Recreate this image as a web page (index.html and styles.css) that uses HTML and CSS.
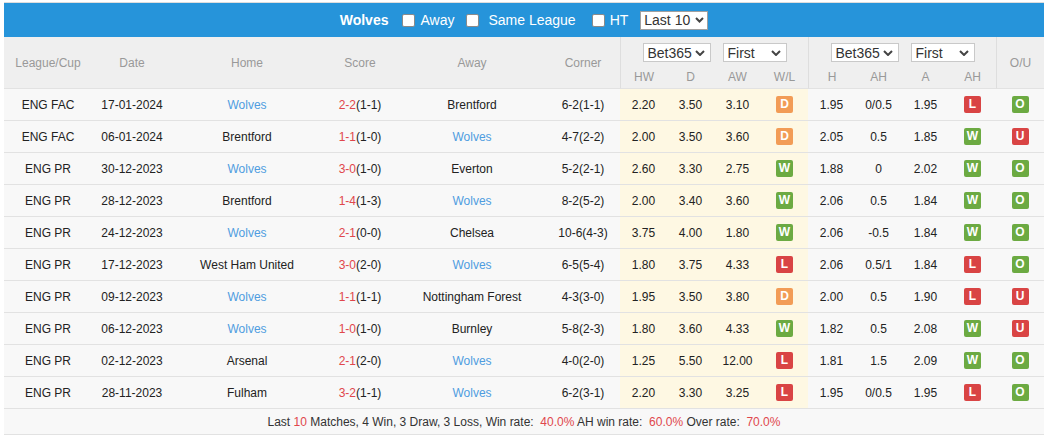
FILE: index.html
```html
<!DOCTYPE html>
<html>
<head>
<meta charset="utf-8">
<link rel="stylesheet" href="styles.css">
</head>
<body>
<div class="panel">
  <div class="titlebar">
    <span class="team">Wolves</span>
    <label class="opt"><input type="checkbox" class="chk">Away</label>
    <label class="opt opt-same"><input type="checkbox" class="chk">Same League</label>
    <label class="opt"><input type="checkbox" class="chk">HT</label>
    <div class="select sel-last"><span>Last 10</span><svg class="chev" width="9" height="6" viewBox="0 0 9 6"><path d="M1 1l3.5 3.5 3.5-3.5" stroke="#444" stroke-width="2" fill="none"/></svg></div>
  </div>
  <table class="matches">
    <colgroup>
      <col class="c-league"><col class="c-date"><col class="c-home"><col class="c-score"><col class="c-away"><col class="c-corner">
      <col class="c-odd"><col class="c-odd"><col class="c-odd"><col class="c-odd">
      <col class="c-odd"><col class="c-odd"><col class="c-odd"><col class="c-odd">
      <col class="c-ou">
    </colgroup>
    <thead>
      <tr class="h1">
        <th rowspan="2">League/Cup</th>
        <th rowspan="2">Date</th>
        <th rowspan="2">Home</th>
        <th rowspan="2">Score</th>
        <th rowspan="2">Away</th>
        <th rowspan="2">Corner</th>
        <th colspan="4" class="grp sel-cell">
          <div class="sels">
            <div class="select sel-book"><span>Bet365</span><svg class="chev" width="10" height="6" viewBox="0 0 10 6"><path d="M1 1l4 4 4-4" stroke="#444" stroke-width="2" fill="none"/></svg></div>
            <div class="select sel-first"><span>First</span><svg class="chev" width="10" height="6" viewBox="0 0 10 6"><path d="M1 1l4 4 4-4" stroke="#444" stroke-width="2" fill="none"/></svg></div>
          </div>
        </th>
        <th colspan="4" class="grp sel-cell">
          <div class="sels">
            <div class="select sel-book"><span>Bet365</span><svg class="chev" width="10" height="6" viewBox="0 0 10 6"><path d="M1 1l4 4 4-4" stroke="#444" stroke-width="2" fill="none"/></svg></div>
            <div class="select sel-first"><span>First</span><svg class="chev" width="10" height="6" viewBox="0 0 10 6"><path d="M1 1l4 4 4-4" stroke="#444" stroke-width="2" fill="none"/></svg></div>
          </div>
        </th>
        <th rowspan="2" class="grp">O/U</th>
      </tr>
      <tr class="h2">
        <th class="grp">HW</th><th>D</th><th>AW</th><th>W/L</th>
        <th class="grp">H</th><th>AH</th><th>A</th><th>AH</th>
      </tr>
    </thead>
    <tbody>
      <tr><td>ENG FAC</td><td>17-01-2024</td><td class="team-hl">Wolves</td><td><span class="red">2-2</span>(1-1)</td><td>Brentford</td><td>6-2(1-1)</td><td class="y">2.20</td><td class="y">3.50</td><td class="y">3.10</td><td class="y"><span class="b d">D</span></td><td>1.95</td><td>0/0.5</td><td>1.95</td><td><span class="b l">L</span></td><td><span class="b w">O</span></td></tr>
      <tr><td>ENG FAC</td><td>06-01-2024</td><td>Brentford</td><td><span class="red">1-1</span>(1-0)</td><td class="team-hl">Wolves</td><td>4-7(2-2)</td><td class="y">2.00</td><td class="y">3.50</td><td class="y">3.60</td><td class="y"><span class="b d">D</span></td><td>2.05</td><td>0.5</td><td>1.85</td><td><span class="b w">W</span></td><td><span class="b l">U</span></td></tr>
      <tr><td>ENG PR</td><td>30-12-2023</td><td class="team-hl">Wolves</td><td><span class="red">3-0</span>(1-0)</td><td>Everton</td><td>5-2(2-1)</td><td class="y">2.60</td><td class="y">3.30</td><td class="y">2.75</td><td class="y"><span class="b w">W</span></td><td>1.88</td><td>0</td><td>2.02</td><td><span class="b w">W</span></td><td><span class="b w">O</span></td></tr>
      <tr><td>ENG PR</td><td>28-12-2023</td><td>Brentford</td><td><span class="red">1-4</span>(1-3)</td><td class="team-hl">Wolves</td><td>8-2(5-2)</td><td class="y">2.00</td><td class="y">3.40</td><td class="y">3.60</td><td class="y"><span class="b w">W</span></td><td>2.06</td><td>0.5</td><td>1.84</td><td><span class="b w">W</span></td><td><span class="b w">O</span></td></tr>
      <tr><td>ENG PR</td><td>24-12-2023</td><td class="team-hl">Wolves</td><td><span class="red">2-1</span>(0-0)</td><td>Chelsea</td><td>10-6(4-3)</td><td class="y">3.75</td><td class="y">4.00</td><td class="y">1.80</td><td class="y"><span class="b w">W</span></td><td>2.06</td><td>-0.5</td><td>1.84</td><td><span class="b w">W</span></td><td><span class="b w">O</span></td></tr>
      <tr><td>ENG PR</td><td>17-12-2023</td><td>West Ham United</td><td><span class="red">3-0</span>(2-0)</td><td class="team-hl">Wolves</td><td>6-5(5-4)</td><td class="y">1.80</td><td class="y">3.75</td><td class="y">4.33</td><td class="y"><span class="b l">L</span></td><td>2.06</td><td>0.5/1</td><td>1.84</td><td><span class="b l">L</span></td><td><span class="b w">O</span></td></tr>
      <tr><td>ENG PR</td><td>09-12-2023</td><td class="team-hl">Wolves</td><td><span class="red">1-1</span>(1-1)</td><td>Nottingham Forest</td><td>4-3(3-0)</td><td class="y">1.95</td><td class="y">3.50</td><td class="y">3.80</td><td class="y"><span class="b d">D</span></td><td>2.00</td><td>0.5</td><td>1.90</td><td><span class="b l">L</span></td><td><span class="b l">U</span></td></tr>
      <tr><td>ENG PR</td><td>06-12-2023</td><td class="team-hl">Wolves</td><td><span class="red">1-0</span>(1-0)</td><td>Burnley</td><td>5-8(2-3)</td><td class="y">1.80</td><td class="y">3.60</td><td class="y">4.33</td><td class="y"><span class="b w">W</span></td><td>1.82</td><td>0.5</td><td>2.08</td><td><span class="b w">W</span></td><td><span class="b l">U</span></td></tr>
      <tr><td>ENG PR</td><td>02-12-2023</td><td>Arsenal</td><td><span class="red">2-1</span>(2-0)</td><td class="team-hl">Wolves</td><td>4-0(2-0)</td><td class="y">1.25</td><td class="y">5.50</td><td class="y">12.00</td><td class="y"><span class="b l">L</span></td><td>1.81</td><td>1.5</td><td>2.09</td><td><span class="b w">W</span></td><td><span class="b w">O</span></td></tr>
      <tr><td>ENG PR</td><td>28-11-2023</td><td>Fulham</td><td><span class="red">3-2</span>(1-1)</td><td class="team-hl">Wolves</td><td>6-2(3-1)</td><td class="y">2.20</td><td class="y">3.30</td><td class="y">3.25</td><td class="y"><span class="b l">L</span></td><td>1.95</td><td>0/0.5</td><td>1.95</td><td><span class="b l">L</span></td><td><span class="b w">O</span></td></tr>
    </tbody>
    <tfoot>
      <tr><td colspan="15">Last <span class="red">10</span> Matches, 4 Win, 3 Draw, 3 Loss, Win rate:&nbsp; <span class="red">40.0%</span> AH win rate:&nbsp; <span class="red">60.0%</span> Over rate:&nbsp; <span class="red">70.0%</span></td></tr>
    </tfoot>
  </table>
</div>
</body>
</html>
```
FILE: styles.css
```css
html, body {
  margin: 0;
  padding: 0;
  background: #ffffff;
}
body {
  font-family: "Liberation Sans", Arial, sans-serif;
  font-size: 12px;
  color: #333333;
}
.panel {
  margin: 2px 4px 0 4px;
  border-top: 1px solid #dddddd;
}
.titlebar {
  height: 34px;
  background: #2694da;
  display: flex;
  align-items: center;
  justify-content: center;
  color: #ffffff;
  font-size: 14px;
}
.team {
  font-weight: bold;
  margin-right: 14px;
}
.opt {
  display: flex;
  align-items: center;
  margin-right: 12px;
}
.opt-same {
  margin-right: 16px;
}
.opt-same .chk {
  margin-right: 9px;
}
.chk {
  appearance: none;
  -webkit-appearance: none;
  width: 13px;
  height: 13px;
  margin: 0 5px 0 0;
  background: #ffffff;
  border: 1px solid #8a8a8a;
  border-radius: 2px;
  box-sizing: border-box;
}
.select {
  display: flex;
  align-items: center;
  justify-content: space-between;
  background: #ffffff;
  border: 1px solid #c9c9c9;
  box-sizing: border-box;
  color: #333333;
  font-size: 14px;
  padding: 0 5px 0 4px;
}
.chev {
  display: block;
  flex: none;
}
.sel-last {
  width: 68px;
  height: 19px;
  border-color: #a0a0a0;
  padding: 0 3px 0 3px;
}
.matches {
  width: 1040px;
  table-layout: fixed;
  border-collapse: separate;
  border-spacing: 0;
}
.c-league { width: 88px; }
.c-date { width: 80px; }
.c-home { width: 150px; }
.c-score { width: 76px; }
.c-away { width: 148px; }
.c-corner { width: 74px; }
.c-odd { width: 47px; }
.c-ou { width: 48px; }
.matches th {
  background: #efefef;
  color: #999999;
  font-weight: normal;
  font-size: 12px;
  padding: 0;
  text-align: center;
  vertical-align: middle;
}
.matches thead tr.h1 {
  height: 29px;
}
.matches thead tr.h2 {
  height: 23px;
}
.matches thead tr.h1 th[rowspan] {
  border-bottom: 1px solid #e2e2e2;
}
.matches thead tr.h2 th {
  border-bottom: 1px solid #e2e2e2;
  vertical-align: top;
  padding-top: 4px;
}
.matches th.grp {
  border-left: 1px solid #dedede;
}
.matches th.sel-cell {
  vertical-align: top;
  padding-top: 6px;
}
.sels {
  display: flex;
  justify-content: center;
  gap: 12px;
}
.sel-book {
  width: 68px;
  height: 19px;
}
.sel-first {
  width: 64px;
  height: 19px;
}
.matches tbody tr {
  height: 32px;
}
.matches tbody td {
  padding: 0;
  text-align: center;
  vertical-align: middle;
  background: #f8f8f8;
  border-bottom: 1px solid #e2e2e2;
  color: #222222;
  white-space: nowrap;
}
.matches tbody td.y {
  background: #fef8e3;
}
.team-hl {
  color: #4f9de0 !important;
}
.red {
  color: #e0474c;
}
.b {
  display: inline-block;
  width: 17px;
  height: 17px;
  line-height: 17px;
  border-radius: 2px;
  color: #ffffff;
  font-weight: bold;
  font-size: 12px;
  vertical-align: middle;
}
.b.w { background: #6caa42; }
.b.l { background: #d94444; }
.b.d { background: #f29c56; }
.matches tfoot tr {
  height: 26px;
}
.matches tfoot td {
  padding: 0;
  text-align: center;
  background: #f8f8f8;
  border-bottom: 1px solid #e2e2e2;
  color: #333333;
}
```
